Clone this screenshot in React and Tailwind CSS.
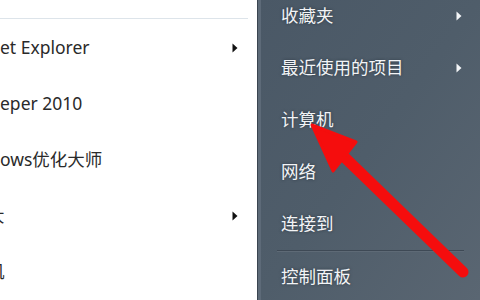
const leftItems = [
  { text: "et Explorer", sub: true },
  { text: "eper 2010" },
  { text: "ows优化大师" },
  { text: "大", sub: true, clip: true },
  { text: "机", clip: true },
];

const rightItems = [
  { text: "收藏夹", sub: true },
  { text: "最近使用的项目", sub: true },
  { text: "计算机" },
  { text: "网络" },
  { text: "连接到" },
];

function Caret({ light }) {
  return (
    <svg width="6" height="10" viewBox="0 0 6 10" className="shrink-0">
      <path d="M0.5 0.5 L5.5 5 L0.5 9.5 Z" fill={light ? "#f4f6f8" : "#111"} />
    </svg>
  );
}

export default function App() {
  return (
    <div
      className="relative flex h-[300px] w-[480px] overflow-hidden bg-white"
      style={{ fontFamily: '"Noto Sans", "Noto Sans CJK SC", sans-serif' }}
    >
      {/* left pane: programs list */}
      <div className="flex w-[257px] shrink-0 flex-col overflow-hidden bg-white">
        <div className="h-[18px] shrink-0" />
        <div className="mr-[9px] h-px shrink-0 bg-[#dde4ea]" />
        <div className="h-px shrink-0" />
        {leftItems.map((it, i) => (
          <div key={i} className="flex h-[56px] shrink-0 items-center justify-between pr-[19px]">
            <span
              className={`whitespace-nowrap text-[17.5px] leading-none text-[#2a2a2a] ${it.clip ? "-ml-[13px]" : ""}`}
            >
              {it.text}
            </span>
            {it.sub && <Caret />}
          </div>
        ))}
      </div>

      {/* right pane: places list */}
      <div className="flex flex-1 border-l border-[#3a4450] bg-gradient-to-br from-[#4a5866] via-[#4f5d6a] to-[#5a6672]">
        <div className="w-[3px] shrink-0 bg-[#5d6a78]" />
        <div className="-mt-[10px] flex flex-1 flex-col pl-[20px] pr-[18px]">
          {rightItems.map((it, i) => (
            <div key={i} className="flex h-[52px] shrink-0 items-center justify-between">
              <span className="text-[17.5px] leading-none text-[#f2f4f6] [text-shadow:0_0_3px_rgba(20,30,40,0.6)]">
                {it.text}
              </span>
              {it.sub && <Caret light />}
            </div>
          ))}
          <div className="-ml-[4px] mr-[-2px] h-px shrink-0 bg-[#3e4955]" />
          <div className="-ml-[4px] mr-[-2px] h-px shrink-0 bg-[#5e6a76]" />
          <div className="flex h-[50px] shrink-0 items-center">
            <span className="text-[17.5px] leading-none text-[#f2f4f6] [text-shadow:0_0_3px_rgba(20,30,40,0.6)]">
              控制面板
            </span>
          </div>
        </div>
      </div>

      {/* red annotation arrow */}
      <svg
        className="pointer-events-none absolute left-0 top-0"
        width="480"
        height="300"
        viewBox="0 0 480 300"
      >
        <line x1="463" y1="272" x2="335" y2="148" stroke="#f50d0d" strokeWidth="11" strokeLinecap="round" />
        <path d="M312 125 L356 142 L333 171 Z" fill="#f50d0d" stroke="#f50d0d" strokeWidth="3" strokeLinejoin="round" />
      </svg>
    </div>
  );
}
